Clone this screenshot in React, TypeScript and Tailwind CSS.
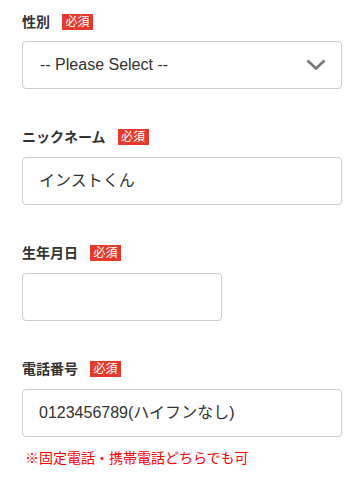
import React from "react";

function Badge() {
  return (
    <span className="ml-[12px] inline-flex h-4 w-[31px] items-center justify-center bg-[#e63a2e] text-[12px] leading-none text-white">
      必須
    </span>
  );
}

function Label({ text }: { text: string }) {
  return (
    <div className="flex h-4 items-center">
      <span className="text-[14px] font-bold leading-none text-[#333]">{text}</span>
      <Badge />
    </div>
  );
}

export default function App() {
  const font = { fontFamily: '"Liberation Sans", "Noto Sans CJK JP", sans-serif' };
  return (
    <div className="min-h-[491px] w-[363px] bg-white pl-[22px] pt-[14px]" style={font}>
      <div className="w-[320px]">
        <div className="mb-10">
          <Label text="性別" />
          <div className="mt-[11px] flex h-12 items-center justify-between rounded-[4px] border border-[#ccc] pl-[17px] pr-[15px]">
            <span className="text-[16px] text-[#333]">-- Please Select --</span>
            <svg width="20" height="12" viewBox="0 0 20 12" fill="none">
              <path d="M1.5 1.5 L10 9.5 L18.5 1.5" stroke="#777" strokeWidth="2.6" />
            </svg>
          </div>
        </div>
        <div className="mb-10">
          <Label text="ニックネーム" />
          <div className="mt-3 flex h-12 items-center rounded-[4px] border border-[#ccc] pl-[16px]">
            <span className="text-[16px] text-[#333]">インストくん</span>
          </div>
        </div>
        <div className="mb-10">
          <Label text="生年月日" />
          <div className="mt-3 h-12 w-[200px] rounded-[4px] border border-[#ccc]" />
        </div>
        <div>
          <Label text="電話番号" />
          <div className="mt-3 flex h-12 items-center rounded-[4px] border border-[#ccc] pl-[16px]">
            <span className="text-[16px] text-[#333]">0123456789(ハイフンなし)</span>
          </div>
          <p className="mt-[11px] pl-[3px] text-[14px] leading-5 text-[#f00]">
            ※固定電話・携帯電話どちらでも可
          </p>
        </div>
      </div>
    </div>
  );
}
